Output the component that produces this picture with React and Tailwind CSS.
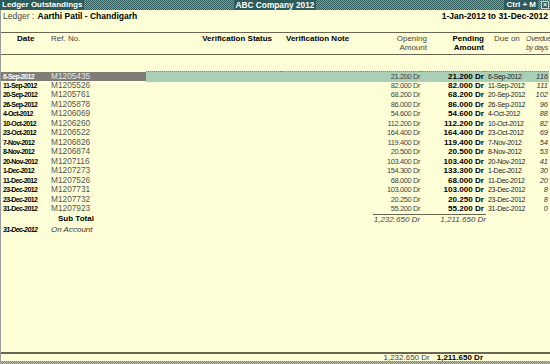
import React from 'react';

// Ledger Outstandings – bill-wise report for a ledger
const rows = [
  ['6-Sep-2012', 'M1205435', '21.200 Dr', '21.200 Dr', '6-Sep-2012', '116'],
  ['11-Sep-2012', 'M1205526', '82.000 Dr', '82.000 Dr', '11-Sep-2012', '111'],
  ['20-Sep-2012', 'M1205761', '68.200 Dr', '68.200 Dr', '20-Sep-2012', '102'],
  ['26-Sep-2012', 'M1205878', '86.000 Dr', '86.000 Dr', '26-Sep-2012', '96'],
  ['4-Oct-2012', 'M1206069', '54.600 Dr', '54.600 Dr', '4-Oct-2012', '88'],
  ['10-Oct-2012', 'M1206260', '112.200 Dr', '112.200 Dr', '10-Oct-2012', '82'],
  ['23-Oct-2012', 'M1206522', '164.400 Dr', '164.400 Dr', '23-Oct-2012', '69'],
  ['7-Nov-2012', 'M1206826', '119.400 Dr', '119.400 Dr', '7-Nov-2012', '54'],
  ['8-Nov-2012', 'M1206874', '20.500 Dr', '20.500 Dr', '8-Nov-2012', '53'],
  ['20-Nov-2012', 'M1207116', '103.400 Dr', '103.400 Dr', '20-Nov-2012', '41'],
  ['1-Dec-2012', 'M1207273', '154.300 Dr', '133.300 Dr', '1-Dec-2012', '30'],
  ['11-Dec-2012', 'M1207526', '68.000 Dr', '68.000 Dr', '11-Dec-2012', '20'],
  ['23-Dec-2012', 'M1207731', '103.000 Dr', '103.000 Dr', '23-Dec-2012', '8'],
  ['23-Dec-2012', 'M1207732', '20.250 Dr', '20.250 Dr', '23-Dec-2012', '8'],
  ['31-Dec-2012', 'M1207923', '55.200 Dr', '55.200 Dr', '31-Dec-2012', '0'],
];

const grade = 'grid grid-cols-[47px_98px_135px_80px_59px_64px_42px_23px]';
const verde = 'bg-[#a9d0b7] border-t border-dotted border-[#5f9a80]';

const Linha = ({ r, ativo }) => (
  <div className={`${grade} h-[9.5px] items-center leading-[9.5px] whitespace-nowrap`}>
    <span className={`pl-[2px] text-[7px] font-bold tracking-[-0.6px] ${ativo ? 'bg-[#7e7e76] text-white' : 'text-black'}`}>{r[0]}</span>
    <span className={`pl-[3px] text-[8.3px] ${ativo ? 'bg-[#7e7e76] text-[#e8e8e0]' : 'text-[#555]'}`}>{r[1]}</span>
    <span className={ativo ? `h-full ${verde}` : ''}></span>
    <span className={ativo ? `h-full ${verde}` : ''}></span>
    <span className={`text-right text-[7.5px] tracking-[-0.4px] text-[#444] ${ativo ? verde : ''}`}>{r[2]}</span>
    <span className={`text-right text-[8.1px] font-bold text-black ${ativo ? verde : ''}`}>{r[3]}</span>
    <span className={`pl-[4px] text-[7px] tracking-[-0.3px] text-[#222] ${ativo ? verde : ''}`}>{r[4]}</span>
    <span className={`text-right pr-[1px] text-[7.5px] italic text-[#333] ${ativo ? verde : ''}`}>{r[5]}</span>
  </div>
);

export default function App() {
  return (
    <div className="w-[550px] h-[364px] flex flex-col bg-[#ffffd7] font-['Liberation_Sans',Arial,sans-serif] overflow-hidden">
      {/* barra de título */}
      <div className="h-[10px] grid grid-cols-[1fr_auto_1fr] items-center bg-[repeating-conic-gradient(#7aa2a2_0%_25%,#2e5a5a_0%_50%)] bg-[length:2px_2px] text-white text-[8px] font-bold leading-[10px] whitespace-nowrap">
        <span className="justify-self-start bg-[#2e5a5a] px-[2px]">Ledger Outstandings</span>
        <span className="bg-[#2e5a5a] px-[2px] text-[8.3px]">ABC Company 2012</span>
        <div className="justify-self-end flex items-center gap-[3px] pr-[1px]">
          <span className="bg-[#2e5a5a] px-[2px]">Ctrl + M</span>
          <span className="w-[8px] h-[8px] border border-[#c8d8d8] bg-[#2e5a5a] text-[7px] leading-[6px] text-center">×</span>
        </div>
      </div>

      <div className="flex-1 flex flex-col border-l border-[#9a9a9a]">
        {/* cabeçalho do razão */}
        <div className="h-[23px] flex justify-between items-start pt-[1px] px-[2px] border-b border-[#6b6552] text-[8.5px] leading-[10px] text-black">
          <span>
            <span className="text-[#444]">Ledger : </span>
            <span className="font-bold ml-[1px]">Aarthi Patil - Chandigarh</span>
          </span>
          <span className="font-bold">1-Jan-2012 to 31-Dec-2012</span>
        </div>

        {/* cabeçalho das colunas */}
        <div className="h-[22px] grid grid-cols-[47px_98px_135px_80px_66px_57px_42px_24px] pt-[1px] border-b border-[#6b6552] text-[8px] leading-[9px] text-black whitespace-nowrap">
          <span className="pl-[16px] font-bold">Date</span>
          <span className="pl-[3px] text-[#444]">Ref. No.</span>
          <span className="text-right pr-[9px] font-bold">Verification Status</span>
          <span className="pl-[5px] font-bold">Verification Note</span>
          <span className="text-right text-[#444]">Opening<br />Amount</span>
          <span className="text-right font-bold">Pending<br />Amount</span>
          <span className="pl-[10px] text-[#444]">Due on</span>
          <span className="italic text-[7px] tracking-[-0.3px] text-[#444]">Overdue<br />by days</span>
        </div>

        {/* linhas */}
        <div className="flex-1 pt-[16px]">
          {rows.map((r, i) => (
            <Linha key={i} r={r} ativo={i === 0} />
          ))}

          <div className={`${grade} h-[11px] items-center leading-[10px] whitespace-nowrap`}>
            <span></span>
            <span className="pl-[10px] text-[8px] font-bold text-black">Sub Total</span>
            <span></span>
            <span></span>
            <span className="col-span-2 flex justify-between border-t border-[#6b6552] ml-[12px] mr-[-2px] text-[8px] italic text-[#444]">
              <span className="w-[47px] text-right">1,232.650 Dr</span>
              <span className="w-[64px] text-right">1,211.650 Dr</span>
            </span>
          </div>
          <div className={`${grade} h-[10px] items-center leading-[10px] whitespace-nowrap`}>
            <span className="pl-[2px] text-[7px] font-bold italic tracking-[-0.6px] text-black">31-Dec-2012</span>
            <span className="pl-[3px] text-[8px] italic text-[#333]">On Account</span>
          </div>
        </div>

        {/* rodapé com totais */}
        <div className="h-[9px] border-t-2 border-[#6b6552] flex items-center justify-end text-[8px] leading-[7px] whitespace-nowrap">
          <span className="text-[#444]">1,232.650 Dr</span>
          <span className="ml-[7px] mr-[67px] font-bold text-black">1,211.650 Dr</span>
        </div>
      </div>
      <div className="h-[3px] bg-[repeating-conic-gradient(#b8b8a8_0%_25%,#8a8a7c_0%_50%)] bg-[length:2px_2px]"></div>
    </div>
  );
}
